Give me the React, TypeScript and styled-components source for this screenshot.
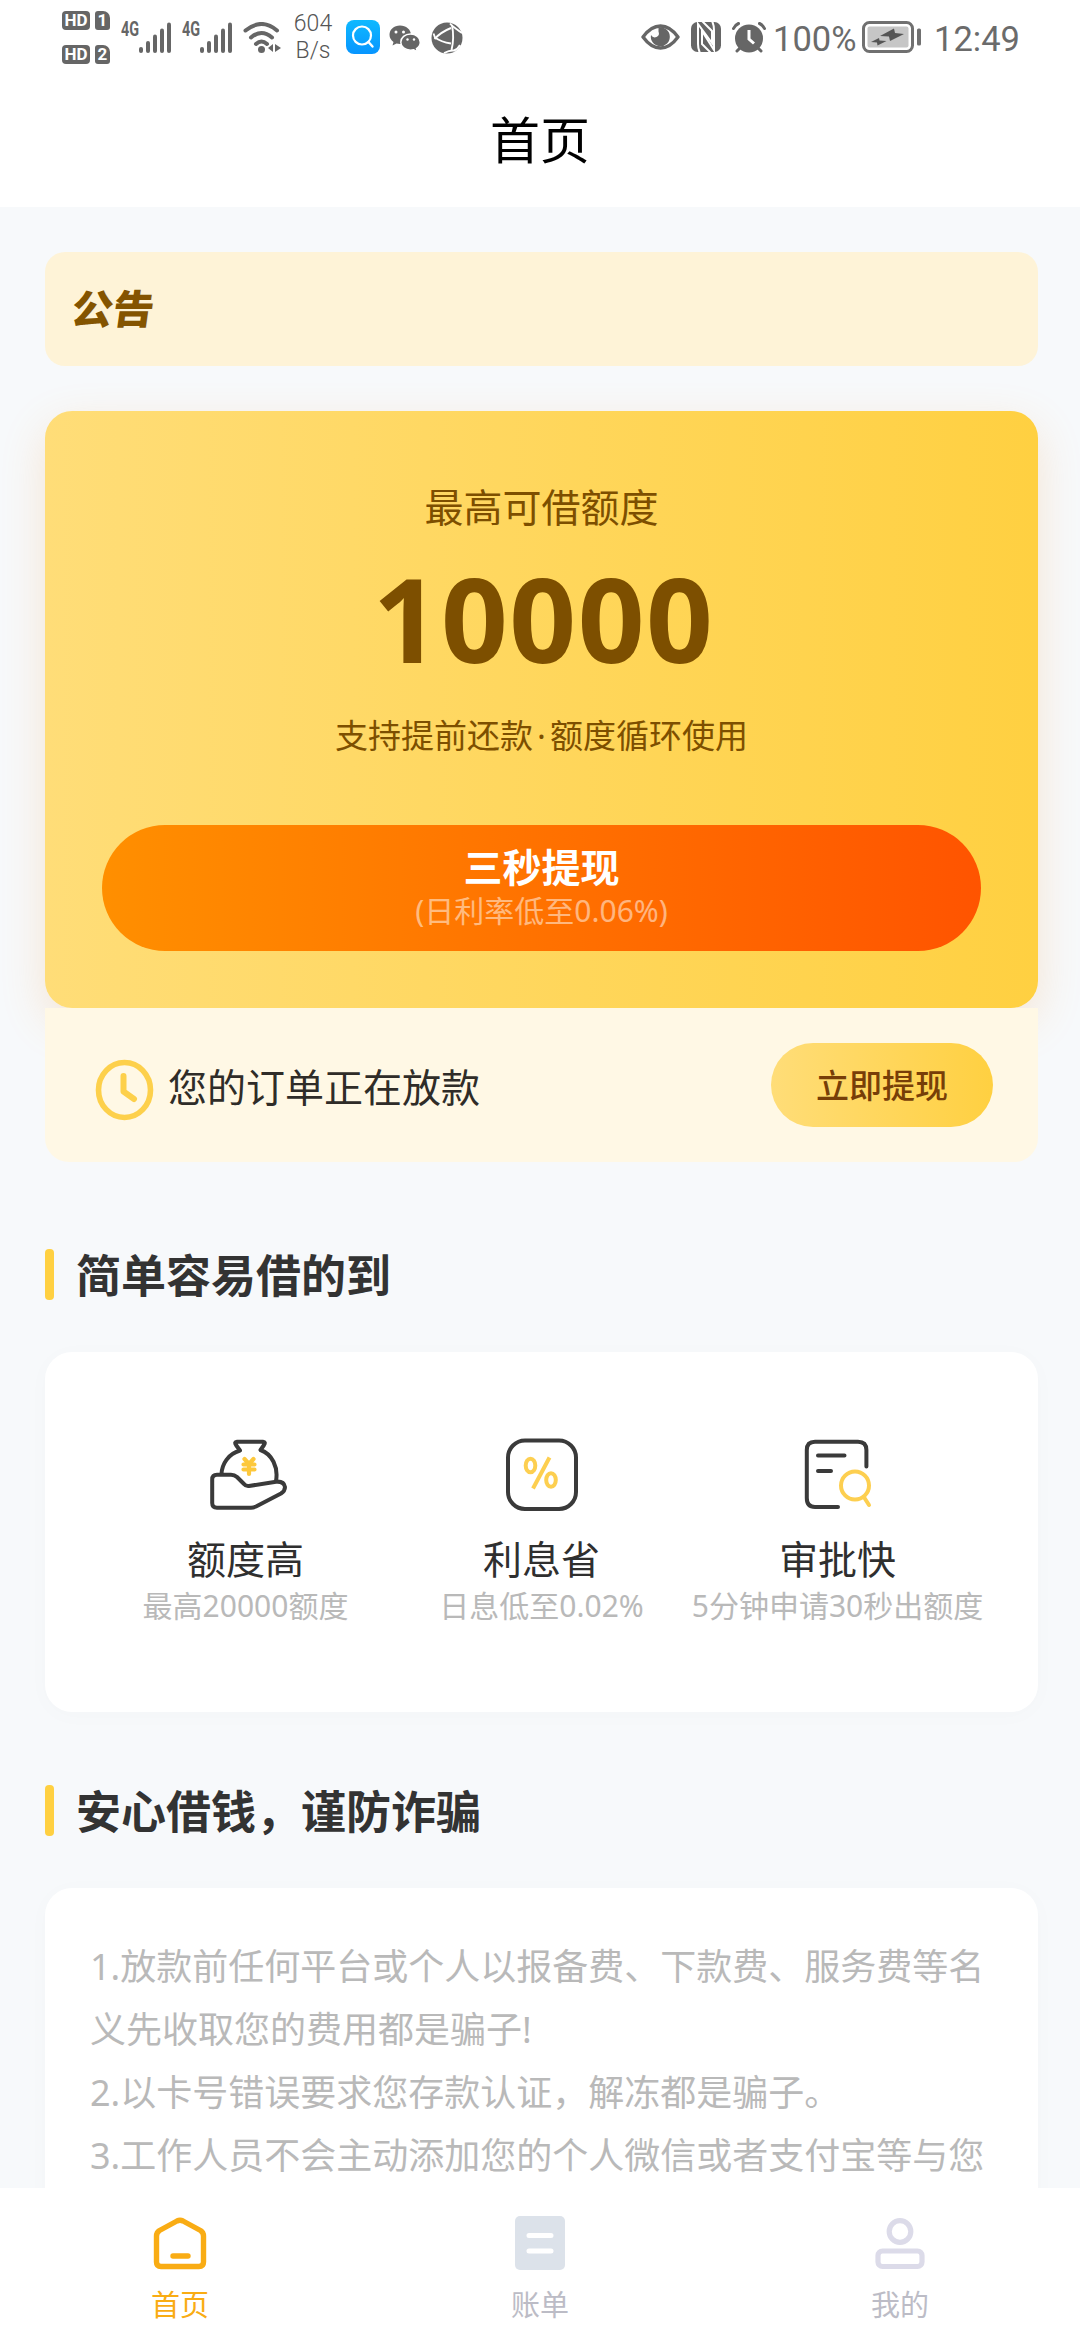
import React from "react";
import styled, { createGlobalStyle } from "styled-components";

const GlobalStyle = createGlobalStyle`
  * { box-sizing: border-box; }
  html, body { margin: 0; padding: 0; background: #f7f9fc; }
  body {
    font-family: "Noto Sans", "Noto Sans CJK SC", sans-serif;
    color: #2f2f2f;
  }
`;

const Page = styled.div`
  display: flex;
  flex-direction: column;
  width: 1080px;
  height: 2340px;
  overflow: hidden;
  background: #f7f9fb;
`;

const Header = styled.header`
  flex: none;
  height: 207px;
  background: #fff;
`;

const StatusBar = styled.div`
  display: flex;
  justify-content: space-between;
  height: 74px;
  padding: 0 63px 0 62px;
  color: #666;
`;

const StatusGroup = styled.div`
  display: flex;
  align-items: center;
  height: 74px;
`;

const HdColumn = styled.div`
  display: flex;
  flex-direction: column;
  gap: 15px;
  width: 59px;
`;

const HdRow = styled.div`
  display: flex;
  gap: 5px;
`;

const Chip = styled.span<{ $w: number; $cut?: boolean }>`
  width: ${(p) => p.$w}px;
  height: 19px;
  border-radius: ${(p) => (p.$cut ? "3px 7px 3px 3px" : "4px")};
  background: #666;
  color: #fff;
  font: 700 17px/19px Roboto, sans-serif;
  text-align: center;
`;

const Signal = styled.div`
  display: flex;
  width: 61px;
  height: 30px;
`;

const SignalLabel = styled.span`
  width: 18px;
  font: 700 20px/14px Roboto, sans-serif;
  transform: scaleX(0.72);
  transform-origin: left center;
`;

const Speed = styled.div`
  width: 44px;
  margin-left: 9px;
  font: 300 23px/27px Roboto, sans-serif;
  text-align: center;
  color: #555;
`;

const Glyph = styled.svg<{ $ml?: number; $mt?: number }>`
  display: block;
  flex: none;
  margin-left: ${(p) => p.$ml ?? 0}px;
  margin-top: ${(p) => p.$mt ?? 0}px;
`;

const StatusText = styled.span<{ $w: number; $ml: number }>`
  width: ${(p) => p.$w}px;
  margin-left: ${(p) => p.$ml}px;
  margin-top: 3px;
  font: 400 34.5px/40px Roboto, sans-serif;
  white-space: nowrap;
  color: #6b6b6b;
`;

const Title = styled.h1`
  margin: 0;
  padding-top: 28px;
  font-size: 50px;
  line-height: 76px;
  font-weight: 400;
  text-align: center;
  color: #000;
`;

const Main = styled.main`
  flex: 1;
  min-height: 0;
  overflow: hidden;
  padding: 45px 42px 0 45px;
`;

const Announcement = styled.section`
  display: flex;
  align-items: center;
  height: 114px;
  padding: 0 27px;
  border-radius: 20px;
  background: #fef3d7;
`;

const AnnouncementTag = styled.span`
  font-size: 40px;
  line-height: 60px;
  font-weight: 900;
  color: #845400;
  transform: skewX(-8deg) scaleX(1.03);
  transform-origin: left center;
`;

const QuotaCard = styled.section`
  display: flex;
  flex-direction: column;
  align-items: center;
  height: 597px;
  margin-top: 45px;
  padding-top: 66px;
  border-radius: 27px;
  background: linear-gradient(90deg, #ffdd78, #ffd041);
  box-shadow: 0 15px 45px rgba(245, 150, 50, 0.2);
  color: #7d4f00;
`;

const QuotaLabel = styled.div`
  font-size: 39px;
  line-height: 60px;
`;

const QuotaAmount = styled.div`
  margin: 21px 0 0 4px;
  font-size: 117px;
  line-height: 120px;
  font-weight: 700;
  letter-spacing: 1.4px;
`;

const QuotaHint = styled.div`
  margin-top: 33px;
  font-size: 33px;
  line-height: 50px;
`;

const Dot = styled.span`
  display: inline-block;
  width: 17px;
  text-align: center;
`;

const WithdrawButton = styled.button`
  display: flex;
  flex-direction: column;
  align-items: center;
  width: 879px;
  height: 126px;
  margin-top: 64px;
  padding: 19px 0 0;
  border: 0;
  border-radius: 63px;
  background: linear-gradient(90deg, #ff8f00, #ff5400);
  font-family: inherit;
  color: #fff;
`;

const ButtonTitle = styled.span`
  font-size: 39px;
  line-height: 46px;
  font-weight: 700;
`;

const ButtonNote = styled.span`
  font-size: 30px;
  line-height: 42px;
  color: rgba(255, 255, 255, 0.5);
`;

const OrderBar = styled.section`
  display: flex;
  align-items: center;
  height: 154px;
  padding: 0 45px 0 49px;
  border-radius: 0 0 24px 24px;
  background: #fff8e5;
`;

const OrderText = styled.span`
  flex: 1;
  margin: 4px 0 0 14px;
  font-size: 39px;
  line-height: 60px;
  color: #2f2c28;
`;

const OrderButton = styled.button`
  width: 222px;
  height: 84px;
  padding: 2px 0 0;
  border: 0;
  border-radius: 42px;
  background: linear-gradient(90deg, #ffdd78, #ffd041);
  font: 500 33px/82px "Noto Sans", "Noto Sans CJK SC", sans-serif;
  color: #773e08;
`;

const SectionTitle = styled.h2<{ $mt: number }>`
  display: flex;
  align-items: center;
  gap: 22px;
  height: 51px;
  margin: ${(p) => p.$mt}px 0 52px;
  font-size: 45px;
  line-height: 53px;
  font-weight: 700;
  color: #333;

  &::before {
    content: "";
    width: 9px;
    height: 51px;
    border-radius: 4px;
    background: #ffd041;
  }
`;

const SectionLabel = styled.span`
  margin-top: 2px;
`;

const Panel = styled.section`
  border-radius: 27px;
  background: #fff;
  box-shadow: 0 3px 24px rgba(0, 0, 0, 0.02);
`;

const FeaturePanel = styled(Panel)`
  display: grid;
  grid-template-columns: repeat(3, 296px);
  justify-content: center;
  height: 360px;
  padding-top: 83px;
`;

const Feature = styled.div`
  display: flex;
  flex-direction: column;
  align-items: center;
  white-space: nowrap;
`;

const FeatureName = styled.div`
  margin-top: 18px;
  font-size: 39px;
  line-height: 60px;
`;

const FeatureNote = styled.div`
  margin-top: -1px;
  font-size: 30px;
  line-height: 36px;
  color: #b9b9b9;
`;

const TipsPanel = styled(Panel)`
  height: 420px;
  padding: 47px 0 0 45px;
  font-size: 36px;
  line-height: 63px;
  color: #b9b9b9;
`;

const TipLine = styled.div`
  white-space: nowrap;
`;

const TabBar = styled.nav`
  flex: none;
  display: grid;
  grid-template-columns: repeat(3, 1fr);
  height: 152px;
  background: #fff;
`;

const Tab = styled.div<{ $active?: boolean }>`
  display: flex;
  flex-direction: column;
  align-items: center;
  padding-top: 28px;
  font-size: 29px;
  line-height: 44px;
  color: ${(p) => (p.$active ? "#f9ac14" : "#bcbcc6")};
`;

const TabLabel = styled.span`
  margin-top: 13px;
`;

const SignalBars = () => (
  <Glyph width="33" height="31" viewBox="0 0 33 31" fill="#666">
    <rect x="0" y="25" width="4" height="6" rx="2" />
    <rect x="7" y="19" width="4" height="12" rx="2" />
    <rect x="14" y="12.5" width="4" height="18.5" rx="2" />
    <rect x="21" y="6.5" width="4" height="24.5" rx="2" />
    <rect x="28" y="0.5" width="4" height="30.5" rx="2" />
  </Glyph>
);

const WifiIcon = () => (
  <Glyph width="39" height="31" viewBox="0 0 39 31" fill="none" stroke="#666" strokeWidth="4" strokeLinecap="round">
    <path d="M2.5 8.5Q18.5-4.5 34 8.5" />
    <path d="M8 15.5Q18.5 6.5 29 15.5" />
    <path d="M13 22Q18.5 17 24 22" />
    <circle cx="18.5" cy="27.5" r="3.5" fill="#666" stroke="none" />
    <path d="M25 26l5-4v8zM38 26l-6-4v8z" fill="#666" stroke="none" />
  </Glyph>
);

const SearchApp = () => (
  <Glyph $ml={11} width="34" height="34" viewBox="0 0 34 34">
    <defs>
      <linearGradient id="searchApp" x1="0" y1="0" x2="0" y2="1">
        <stop offset="0" stopColor="#0fb9ff" />
        <stop offset="1" stopColor="#0795ff" />
      </linearGradient>
    </defs>
    <rect width="34" height="34" rx="8" fill="url(#searchApp)" />
    <circle cx="16" cy="15.5" r="9" fill="none" stroke="#fff" strokeWidth="2.2" />
    <path d="M22.500 22l4 4.500" stroke="#fff" strokeWidth="2.4" strokeLinecap="round" />
  </Glyph>
);

const ChatIcon = () => (
  <Glyph $ml={9} $mt={3} width="32" height="28" viewBox="0 0 32 28">
    <path d="M11 .5C5 .5.5 4.500.5 9.800c0 3 1.500 5.500 4 7.200L3.500 20.500l4-2c1.200.3 2.300.5 3.500.5C17 19 22 15 22 9.800S17 .5 11 .5z" fill="#666" />
    <path d="M21.500 9C16 9 11.800 12.700 11.800 17.200s4.300 8 9.700 8c1.100 0 2.200-.2 3.200-.5l3.800 2.300-1-3.400c2.400-1.500 3.800-3.700 3.800-6.400C31.300 12.700 27 9 21.500 9z" fill="#666" stroke="#fff" strokeWidth="1.500" />
    <g fill="#fff">
      <circle cx="7" cy="7" r="1.500" />
      <circle cx="14.500" cy="7" r="1.500" />
      <circle cx="18.500" cy="14.500" r="1.200" />
      <circle cx="25" cy="14.500" r="1.200" />
    </g>
  </Glyph>
);

const BallIcon = () => (
  <Glyph $ml={10} $mt={1} width="32" height="32" viewBox="0 0 32 32">
    <circle cx="16" cy="16" r="15.500" fill="#666" />
    <g fill="none" stroke="#fff" strokeWidth="1.900">
      <path d="M19 1.500Q21 4 24 6Q28 9 31 11" />
      <path d="M21 3Q23.500 16 20.500 28" />
      <path d="M20 6Q10 10 3.500 17" />
      <path d="M2.500 11.500L4 15.500Q10 20 20 21.500" />
      <path d="M13 31Q19 28 23 28.500Q27 27 29 23" />
    </g>
  </Glyph>
);

const EyeIcon = () => (
  <Glyph width="39" height="26" viewBox="0 0 39 26">
    <path d="M2 13Q10 2 19.500 2T37 13Q29 24 19.500 24T2 13z" fill="none" stroke="#666" strokeWidth="3.400" strokeLinejoin="round" />
    <path d="M17.500 3.500A9.500 9.500 0 1 1 10 11Q12 14.500 15.500 13T17.500 7.500Q17.500 5.500 17.500 3.500z" fill="#666" />
  </Glyph>
);

const NfcIcon = () => (
  <Glyph $ml={11} width="30" height="30" viewBox="0 0 30 30">
    <rect width="30" height="30" rx="6.500" fill="#666" />
    <g fill="none" stroke="#fff" strokeWidth="2">
      <path d="M9 31Q7 27 7 22V2L21 21V9L11-1" />
      <path d="M21-1Q23 3 23 8V28L11 9V22L20 31" />
    </g>
  </Glyph>
);

const AlarmIcon = () => (
  <Glyph $ml={11} width="34" height="31" viewBox="0 0 34 31">
    <circle cx="17" cy="16.500" r="14" fill="#666" />
    <path d="M1.500 6.500Q3 3 6.500 1.500M32.500 6.500Q31 3 27.500 1.500M5 29l3-3M29 29l-3-3" stroke="#666" strokeWidth="3" strokeLinecap="round" fill="none" />
    <path d="M17 8v9l5 4.500" stroke="#fff" strokeWidth="3" fill="none" />
  </Glyph>
);

const BatteryIcon = () => (
  <Glyph width="60" height="32" viewBox="0 0 60 32">
    <rect x="1.500" y="1.500" width="49" height="29" rx="6" fill="none" stroke="#707070" strokeWidth="3" />
    <rect x="5.500" y="5.500" width="41" height="21" rx="2" fill="#c6c6c6" />
    <path d="M18 15L32 7.500l1 4.500 9 1-14 7-1-4.500zM9 21l8-4 .5 2.500 7 .5-9 4.500-.5-3z" fill="#555" />
    <rect x="55" y="7.500" width="4" height="17" rx="1.500" fill="#707070" />
  </Glyph>
);

const ClockIcon = () => (
  <Glyph $mt={9} width="60" height="62" viewBox="0 0 60 62" fill="none" stroke="#fdd04b">
    <ellipse cx="30.500" cy="31" rx="26" ry="27.500" strokeWidth="5.600" />
    <path d="M29.500 17v15.500l10.500 7.500" strokeWidth="6" strokeLinecap="round" strokeLinejoin="round" />
  </Glyph>
);

const MoneyBagIcon = () => (
  <Glyph $ml={6} width="78" height="76" viewBox="0 -4 78 76" fill="none" stroke="#3a3a3a" strokeWidth="4" strokeLinecap="round" strokeLinejoin="round">
    <path d="M11.500 35C12 25 18 15 30 11.500L26 6Q24 3 27 2.700H53Q56 3 54 6L50.500 11C62 15 68.500 28 66 42" />
    <path d="M7 35.700H21Q24.500 35.700 27 38L34 45Q36 47.500 39 47L66 42.700Q74 42 75 48Q75 52 71 54.500L46 67.500Q43.500 68.700 41 68.700H7Q2.200 68.700 2.200 64V40.500Q2.200 35.700 7 35.700z" />
    <path d="M34.500 20L39 25L43.500 20M33.500 25.500H44.500M33.500 30.500H44.500M39 25V35" stroke="#fdc83c" strokeWidth="4.200" />
  </Glyph>
);

const PercentIcon = () => (
  <Glyph width="76" height="76" viewBox="0 0 76 76" fill="none" strokeWidth="4">
    <rect x="4" y="5.500" width="68" height="68.500" rx="17" stroke="#3a3a3a" />
    <g stroke="#fdcf50">
      <ellipse cx="26.500" cy="30.500" rx="4.800" ry="6.800" />
      <ellipse cx="47" cy="45" rx="4.800" ry="6.800" />
      <path d="M45.500 22.500L29 53.500" />
    </g>
  </Glyph>
);

const ReviewIcon = () => (
  <Glyph $ml={3} width="70" height="76" viewBox="0 -4 70 76" fill="none" stroke="#3a3a3a" strokeWidth="4" strokeLinecap="round">
    <path d="M62.400 27.500V11Q62.400 2.700 54 2.700H11Q2.800 2.700 2.800 11V59Q2.800 68 11 68H34M14 16.500H40.500M14 32H27" />
    <g stroke="#fdcf50">
      <circle cx="51" cy="46.500" r="14" />
      <path d="M60.500 59L65 66" />
    </g>
  </Glyph>
);

const HomeIcon = () => (
  <Glyph width="56" height="54" viewBox="0 0 56 54" fill="none" stroke="#f9ac14" strokeWidth="5.400" strokeLinecap="round" strokeLinejoin="round">
    <path d="M25 5Q28 3.500 31 5L48.500 14.500Q51.500 16.500 51.500 20V46Q51.500 50.500 47 50.500H9Q4.500 50.500 4.500 46V20Q4.500 16.500 7.500 14.500z" />
    <path d="M21 40H36" />
  </Glyph>
);

const BillIcon = () => (
  <Glyph width="50" height="54" viewBox="0 0 50 54">
    <rect width="50" height="54" rx="5" fill="#dce2ea" />
    <path d="M14 19.500H36M14 35H36" stroke="#fff" strokeWidth="5" strokeLinecap="round" />
  </Glyph>
);

const PersonIcon = () => (
  <Glyph width="52" height="54" viewBox="0 0 52 54" fill="none" stroke="#dcdbe9" strokeWidth="5.200">
    <circle cx="26" cy="15.500" r="10.800" />
    <rect x="4" y="35" width="44" height="15.500" rx="4.500" />
  </Glyph>
);

const features = [
  { icon: <MoneyBagIcon />, name: "额度高", note: "最高20000额度" },
  { icon: <PercentIcon />, name: "利息省", note: "日息低至0.02%" },
  { icon: <ReviewIcon />, name: "审批快", note: "5分钟申请30秒出额度" },
];

const tips = [
  "1.放款前任何平台或个人以报备费、下款费、服务费等名",
  "义先收取您的费用都是骗子!",
  "2.以卡号错误要求您存款认证，解冻都是骗子。",
  "3.工作人员不会主动添加您的个人微信或者支付宝等与您",
];

const tabs = [
  { icon: <HomeIcon />, label: "首页", active: true },
  { icon: <BillIcon />, label: "账单", active: false },
  { icon: <PersonIcon />, label: "我的", active: false },
];

export default function App() {
  return (
    <Page>
      <GlobalStyle />
      <Header>
        <StatusBar>
          <StatusGroup>
            <HdColumn>
              {[1, 2].map((sim) => (
                <HdRow key={sim}>
                  <Chip $w={28}>HD</Chip>
                  <Chip $w={15} $cut>{sim}</Chip>
                </HdRow>
              ))}
            </HdColumn>
            <Signal><SignalLabel>4G</SignalLabel><SignalBars /></Signal>
            <Signal><SignalLabel>4G</SignalLabel><SignalBars /></Signal>
            <WifiIcon />
            <Speed>604<br />B/s</Speed>
            <SearchApp />
            <ChatIcon />
            <BallIcon />
          </StatusGroup>
          <StatusGroup>
            <EyeIcon />
            <NfcIcon />
            <AlarmIcon />
            <StatusText $w={89} $ml={7}>100%</StatusText>
            <BatteryIcon />
            <StatusText $w={83} $ml={12}>12:49</StatusText>
          </StatusGroup>
        </StatusBar>
        <Title>首页</Title>
      </Header>
      <Main>
        <Announcement>
          <AnnouncementTag>公告</AnnouncementTag>
        </Announcement>
        <QuotaCard>
          <QuotaLabel>最高可借额度</QuotaLabel>
          <QuotaAmount>10000</QuotaAmount>
          <QuotaHint>支持提前还款<Dot>·</Dot>额度循环使用</QuotaHint>
          <WithdrawButton>
            <ButtonTitle>三秒提现</ButtonTitle>
            <ButtonNote>(日利率低至0.06%)</ButtonNote>
          </WithdrawButton>
        </QuotaCard>
        <OrderBar>
          <ClockIcon />
          <OrderText>您的订单正在放款</OrderText>
          <OrderButton>立即提现</OrderButton>
        </OrderBar>
        <SectionTitle $mt={87}><SectionLabel>简单容易借的到</SectionLabel></SectionTitle>
        <FeaturePanel>
          {features.map((f) => (
            <Feature key={f.name}>
              {f.icon}
              <FeatureName>{f.name}</FeatureName>
              <FeatureNote>{f.note}</FeatureNote>
            </Feature>
          ))}
        </FeaturePanel>
        <SectionTitle $mt={73}><SectionLabel>安心借钱，谨防诈骗</SectionLabel></SectionTitle>
        <TipsPanel>
          {tips.map((t) => (
            <TipLine key={t}>{t}</TipLine>
          ))}
        </TipsPanel>
      </Main>
      <TabBar>
        {tabs.map((t) => (
          <Tab key={t.label} $active={t.active}>
            {t.icon}
            <TabLabel>{t.label}</TabLabel>
          </Tab>
        ))}
      </TabBar>
    </Page>
  );
}
